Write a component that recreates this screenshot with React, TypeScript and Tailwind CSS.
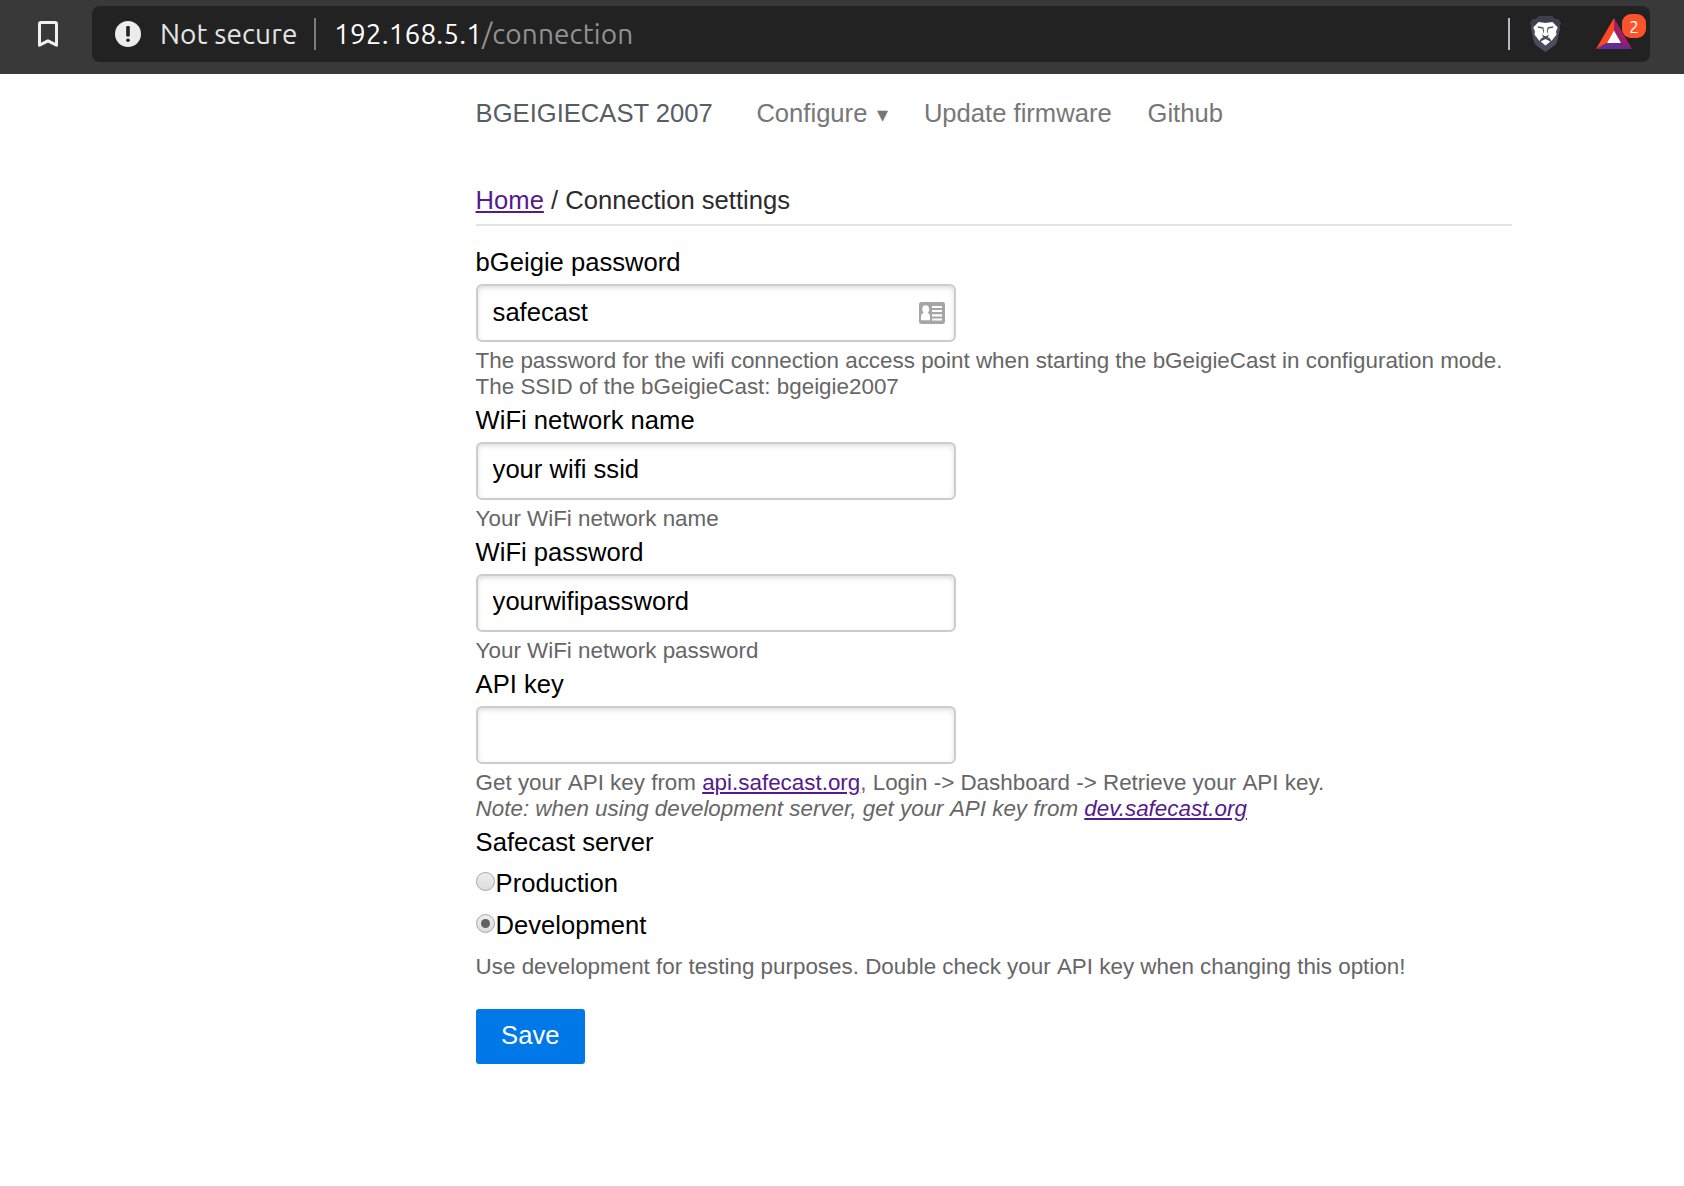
import type { ReactNode } from "react";

function BookmarkIcon() {
  return (
    <svg className="ml-[37px] h-[28px] w-[22px] shrink-0" viewBox="0 0 22 28" fill="none">
      <path d="M4 2.5H18Q19.5 2.5 19.5 4V25.2L11 20.8L2.5 25.2V4Q2.5 2.5 4 2.5Z" stroke="#f1f1f1" strokeWidth="3" strokeLinejoin="round" />
    </svg>
  );
}

function WarningIcon() {
  return (
    <svg className="ml-[23px] h-[26px] w-[26px] shrink-0" viewBox="0 0 26 26">
      <circle cx="13" cy="13" r="13" fill="#ececec" />
      <rect x="11.2" y="5" width="3.6" height="10.6" rx="1.2" fill="#222" />
      <circle cx="13" cy="19.3" r="1.8" fill="#222" />
    </svg>
  );
}

function LionIcon() {
  return (
    <svg className="ml-[20px] h-[36px] w-[31px] shrink-0" viewBox="0 0 31 36">
      <path d="M9 0H22L25 3H28L31 7L29.5 10L30 13L27 26Q26.3 28.5 24 30L15.5 36L7 30Q4.7 28.5 4 26L1 13L1.5 10L0 7L3 3H6Z" fill="#4b4c5d" />
      <path d="M9 0H22L25 3H28L31 7L29.5 10L22 6H9L1.5 10L0 7L3 3H6Z" fill="#3e3f4e" />
      <path d="M8.5 6L15.5 7L22.5 6L27.7 11.5L26 15.5L26.5 18.5L21.5 25L20 22.5L15.5 20L11 22.5L9.5 25L4.5 18.5L5 15.5L3.3 11.5Z" fill="#fff" />
      <path d="M15.5 23L20.3 25.6L15.5 29.5L10.7 25.6Z" fill="#fff" />
      <path d="M7.5 10.3L13.3 11.2L14.2 15.5L12.5 18.3L13.3 15.5L12.4 12.4L8 11.8ZM23.5 10.3L17.7 11.2L16.8 15.5L18.5 18.3L17.7 15.5L18.6 12.4L23 11.8Z" fill="#4b4c5d" />
      <path d="M12 18.6L15.5 20.6L19 18.6L18 21L15.5 22L13 21Z" fill="#4b4c5d" />
    </svg>
  );
}

function RewardsIcon() {
  return (
    <svg className="h-[32px] w-[36px]" viewBox="0 0 36 32">
      <path d="M18 0V13L11 25L0 31Z" fill="#ff4724" />
      <path d="M18 0L36 31L25 25L18 13Z" fill="#9e1f63" />
      <path d="M0 31L11 25H25L36 31Z" fill="#662d91" />
      <path d="M18 12.5L25 25H11Z" fill="#fff" />
    </svg>
  );
}

function ContactCardIcon() {
  return (
    <svg className="h-[22px] w-[26px]" viewBox="0 0 26 22">
      <rect width="26" height="22" rx="2.5" fill="#a6a6a6" />
      <ellipse cx="6.7" cy="7.3" rx="3.4" ry="4" fill="#fff" />
      <path d="M2 18.3V15Q2 11.5 5 10.5H8.3Q11 11.5 11 15V18.3Z" fill="#fff" />
      <path d="M13 5H23M13 9H23M13 13.3H23M13 17.5H23" stroke="#fff" strokeWidth="2.2" />
    </svg>
  );
}

function BrowserBar() {
  return (
    <header className="flex h-[74px] w-full items-start bg-[#393939] pt-[6px] font-['Ubuntu','Noto_Sans',sans-serif] text-[28px] tracking-[0.1px]">
      <div className="flex h-[56px] w-[92px] shrink-0 items-center">
        <BookmarkIcon />
      </div>
      <div className="flex h-[56px] w-[1558px] items-center rounded-[8px] bg-[#222]">
        <WarningIcon />
        <span className="ml-[19px] w-[138px] pb-[1px] whitespace-nowrap text-[#e4e4e4]">Not secure</span>
        <span className="ml-[16px] h-[32px] w-[2px] bg-[#7c7c7c]" />
        <span className="ml-[18px] pb-[1px] whitespace-nowrap text-white">
          192.168.5.1<span className="text-[#919191]">/connection</span>
        </span>
        <span className="ml-auto h-[32px] w-[2px] bg-[#b4b8bc]" />
        <LionIcon />
        <div className="relative mr-[18px] ml-[35px]">
          <RewardsIcon />
          <span className="absolute -top-[4px] left-[26px] flex h-[24px] w-[24px] items-center justify-center rounded-[9px] bg-[#fb542b] text-[17px] leading-none text-white">2</span>
        </div>
      </div>
    </header>
  );
}

const linkClass = "text-[#551a8b] underline";

function Help({ children }: { children: ReactNode }) {
  return <div className="whitespace-nowrap text-[22.4px] leading-[26px] text-[#666]">{children}</div>;
}

// An inline box with a hair of padding keeps the space before the "A" unkerned.
function Api() {
  return <span className="pl-[0.1px]">API</span>;
}

function Field({ label, value, icon, children }: { label: string; value: string; icon?: ReactNode; children: ReactNode }) {
  return (
    <div className="pb-[4px]">
      <label className="block leading-[32px]">{label}</label>
      <div className="relative mt-[6px] mb-[6px] h-[58px] w-[480px]">
        <input
          className={`h-full w-full rounded-[6px] border-2 border-[#ccc] bg-white px-[15px] text-black shadow-[inset_0_2px_5px_#ddd] outline-none ${icon ? "pb-[1px]" : "pb-[3px]"}`}
          defaultValue={value}
        />
        {icon && <span className="absolute top-[18px] right-[11px]">{icon}</span>}
      </div>
      <Help>{children}</Help>
    </div>
  );
}

function Radio({ label, checked }: { label: string; checked?: boolean }) {
  return (
    <label className="flex h-[42px] leading-[32px]">
      <span className="mt-[5px] mr-[1px] flex h-[19px] w-[19px] items-center justify-center rounded-full border border-[#a8a8a8] bg-linear-to-b from-[#eee] to-[#dcdcdc]">
        {checked && <span className="h-[9px] w-[9px] rounded-full bg-[#606060]" />}
      </span>
      {label}
    </label>
  );
}

export default function App() {
  return (
    <div className="min-h-[1186px] w-full bg-white">
      <BrowserBar />
      <main className="ml-[475.6px] w-[1036.4px] pt-[23px] font-['Liberation_Sans',Arial,sans-serif] text-[25.6px] text-black">
        <nav className="flex leading-[32px] whitespace-nowrap text-[#777]">
          <span className="w-[280.8px] text-[#565d64]">BGEIGIECAST 2007</span>
          <span className="w-[167.5px]">
            Configure <span className="ml-[3px] text-[21.5px]">▾</span>
          </span>
          <span className="w-[223.6px]">Update firmware</span>
          <span>Github</span>
        </nav>
        <div className="mt-[53px] h-[42px] border-b-2 border-[#e3e3e3] leading-[32px] text-[#2b2b2b]">
          <a className={linkClass}>Home</a> / Connection settings
        </div>
        <form className="mt-[20px]">
          <Field label="bGeigie password" value="safecast" icon={<ContactCardIcon />}>
            The password for the wifi connection access point when starting the bGeigieCast in configuration mode.
            <br />
            The SSID of the bGeigieCast: bgeigie2007
          </Field>
          <Field label="WiFi network name" value="your wifi ssid">Your WiFi network name</Field>
          <Field label="WiFi password" value="yourwifipassword">Your WiFi network password</Field>
          <Field label="API key" value="">
            Get your <Api /> key from <a className={linkClass}>api.safecast.org</a>, Login -&gt; Dashboard -&gt; Retrieve your <Api /> key.
            <br />
            <i>
              Note: when using development server, get your <Api /> key from <a className={linkClass}>dev.safecast.org</a>
            </i>
          </Field>
          <div className="mb-[9px] leading-[32px]">Safecast server</div>
          <Radio label="Production" />
          <Radio label="Development" checked />
          <div className="pt-[3px]">
            <Help>
              Use development for testing purposes. Double check your <Api /> key when changing this option!
            </Help>
          </div>
          <button type="button" className="mt-[29px] flex h-[55px] w-[109.4px] items-center justify-center rounded-[3px] bg-[#0078e7] pb-[3px] text-white">
            Save
          </button>
        </form>
      </main>
    </div>
  );
}
